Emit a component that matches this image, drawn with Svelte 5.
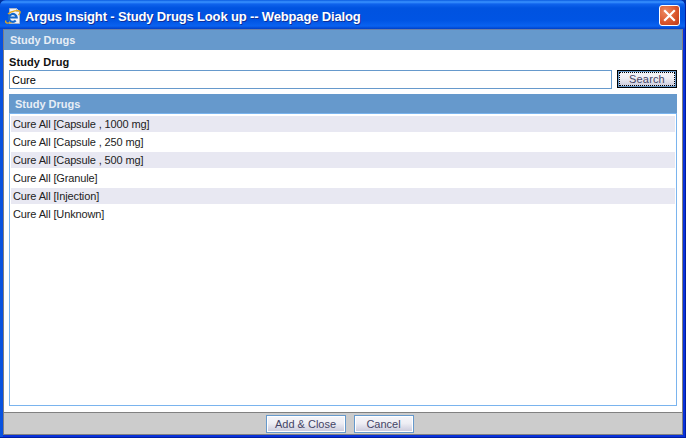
<script>
  let query = $state('Cure');
  const drugs = [
    'Cure All [Capsule , 1000 mg]',
    'Cure All [Capsule , 250 mg]',
    'Cure All [Capsule , 500 mg]',
    'Cure All [Granule]',
    'Cure All [Injection]',
    'Cure All [Unknown]'
  ];
</script>

<div class="window">
  <div class="titlebar">
    <svg class="app-icon" width="16" height="17" viewBox="0 0 16 17">
      <path d="M4.5 .5h7l3 3v12h-10z" fill="#f2f4fa" stroke="#aab4c8" stroke-width="1" />
      <path d="M11.5 .5v3h3" fill="#d8deea" stroke="#aab4c8" stroke-width="1" />
      <path d="M1 12.5C-.5 16 4 15.5 8 13.5M3 6C6 3 14 1.500 15 3.500c.5 1.200-.5 2.500-1.500 3.500" fill="none" stroke="#e6a818" stroke-width="1.300" />
      <path d="M4.500 9.500h7.200a3.900 3.900 0 1 0-1 3" fill="none" stroke="#1468cc" stroke-width="2.200" />
    </svg>
    <span class="title">Argus Insight - Study Drugs Look up -- Webpage Dialog</span>
    <div class="close">
      <svg width="13" height="13" viewBox="0 0 13 13">
        <path d="M2 2l9 9M11 2l-9 9" stroke="#fff" stroke-width="2.2" stroke-linecap="square" />
      </svg>
    </div>
  </div>

  <div class="client">
    <div class="page-head">Study Drugs</div>

    <div class="body">
      <div class="field-label">Study Drug</div>
      <div class="search-row">
        <input class="search-input" bind:value={query} />
        <button class="btn search-btn"><span class="focus">Search</span></button>
      </div>

      <div class="results">
        <div class="results-head">Study Drugs</div>
        <div class="list">
          {#each drugs as drug, i}
            <div class="row" class:odd={i % 2 === 0}>{drug}</div>
          {/each}
        </div>
      </div>
    </div>

    <div class="footer">
      <button class="btn foot-btn add">Add &amp; Close</button>
      <button class="btn foot-btn cancel">Cancel</button>
    </div>
  </div>
</div>

<style>
  :global(body) {
    margin: 0;
    background: #00309c;
  }

  .window {
    width: 686px;
    height: 438px;
    box-sizing: border-box;
    display: flex;
    flex-direction: column;
    background: linear-gradient(90deg, #0855dd 0, #0a4fe0 3px, #0831d9 3px);
    padding: 0 2px 2px 3px;
    border-radius: 6px 6px 0 0;
    font-family: "Liberation Sans", Arial, sans-serif;
    overflow: hidden;
    position: relative;
    border-right: 1px solid #001ea0;
    border-bottom: 1px solid #001ea0;
  }

  .titlebar {
    height: 29px;
    flex: none;
    margin: 0 -2px 0 -3px;
    padding: 0 5px 0 5px;
    display: flex;
    align-items: center;
    gap: 4px;
    background: linear-gradient(180deg, #0a5be0 0, #3a93ff 2px, #0f63ec 4px, #0053e0 8px, #0054e3 20px, #0a62f0 26px, #0040c8 29px);
  }

  .app-icon {
    flex: none;
    margin-top: 3px;
  }

  .title {
    flex: 1;
    color: #fff;
    font: bold 13px "Liberation Sans", Arial, sans-serif;
    letter-spacing: -0.15px;
    white-space: nowrap;
    text-shadow: 1px 1px 0 #0f2f9a;
    margin-top: 3px;
  }

  .close {
    width: 21px;
    height: 21px;
    margin-top: 2px;
    box-sizing: border-box;
    border: 1px solid #fff;
    border-radius: 3px;
    background: radial-gradient(circle at 30% 30%, #ee8a60, #d8532a 60%, #c03a18);
    display: flex;
    align-items: center;
    justify-content: center;
  }

  .client {
    flex: 1;
    display: flex;
    flex-direction: column;
    min-height: 0;
    background: #fff;
    border-left: 1px solid #808080;
    border-right: 1px solid #808080;
    border-top: 1px solid #6a7fa8;
  }

  .page-head {
    height: 20px;
    flex: none;
    background: #6699cc;
    color: #e8eef6;
    font-size: 11px;
    font-weight: bold;
    line-height: 20px;
    padding-left: 6px;
  }

  .body {
    flex: 1;
    min-height: 0;
    display: flex;
    flex-direction: column;
    padding: 6px 5px 6px 5px;
  }

  .field-label {
    font-size: 11px;
    font-weight: bold;
    color: #111;
    line-height: 13px;
    height: 14px;
    letter-spacing: 0.1px;
  }

  .search-row {
    display: flex;
    gap: 5px;
    height: 19px;
    flex: none;
  }

  .search-input {
    flex: 1;
    min-width: 0;
    box-sizing: border-box;
    height: 19px;
    margin: 0;
    border: 1px solid #6699cc;
    padding: 0 2px;
    font: 11px "Liberation Sans", Arial, sans-serif;
    color: #000;
    outline: none;
    background: #fff;
  }

  .btn {
    box-sizing: border-box;
    margin: 0;
    font: 11px "Liberation Sans", Arial, sans-serif;
    color: #444466;
    background: linear-gradient(180deg, #f6f6fa 0, #eeeef4 45%, #c8c8da 100%);
    padding: 0;
  }

  .search-btn {
    width: 60px;
    height: 18px;
    border: 1px solid #000;
    outline: 1px solid #6699cc;
    outline-offset: -2px;
    display: flex;
    align-items: stretch;
    padding: 1px;
  }

  .focus {
    flex: 1;
    border: 1px dotted #000;
    line-height: 13px;
    text-align: center;
    letter-spacing: 0.15px;
  }

  .results {
    flex: 1;
    min-height: 0;
    display: flex;
    flex-direction: column;
    margin-top: 5px;
  }

  .results-head {
    height: 19px;
    flex: none;
    background: #6699cc;
    color: #e8eef6;
    font-size: 11px;
    font-weight: bold;
    line-height: 20px;
    padding-left: 6px;
  }

  .list {
    flex: 1;
    min-height: 0;
    box-sizing: border-box;
    border: 1px solid #7ab4ee;
    padding: 2px 1px;
  }

  .row {
    height: 16px;
    line-height: 16px;
    margin-bottom: 2px;
    padding-left: 2px;
    font-size: 11px;
    letter-spacing: -0.13px;
    color: #222;
  }

  .row.odd {
    background: #e8e8f2;
  }

  .footer {
    height: 23px;
    box-sizing: border-box;
    flex: none;
    background: #cccccc;
    border-top: 1px solid #808080;
    border-bottom: 1px solid #808080;
    display: flex;
    justify-content: center;
    align-items: center;
    gap: 8px;
    padding: 1px 7px 0 0;
  }

  .foot-btn {
    height: 18px;
    border: 1px solid #6699cc;
    outline: 1px solid #fff;
    outline-offset: -2px;
  }

  .add {
    width: 80px;
  }

  .cancel {
    width: 60px;
  }
</style>
